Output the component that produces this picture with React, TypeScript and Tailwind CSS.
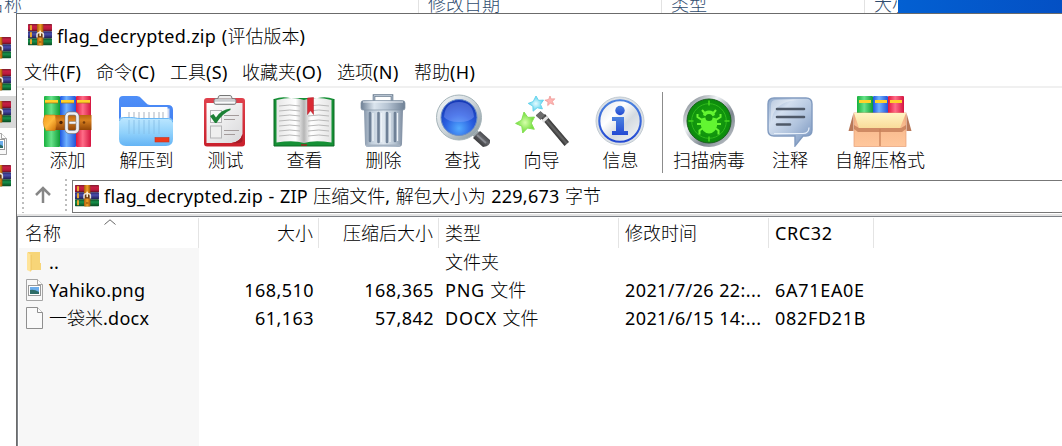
import React from "react";

function ArchiveIcon() {
  return (
    <svg width="24" height="22" viewBox="0 0 24 22" className="block shrink-0">
      <defs>
        <linearGradient id="bkRed" x1="0" y1="0" x2="0" y2="1"><stop offset="0" stopColor="#7a1c2c" /><stop offset=".3" stopColor="#c81f45" /><stop offset=".7" stopColor="#b81a3c" /><stop offset="1" stopColor="#5c1020" /></linearGradient>
        <linearGradient id="bkBlue" x1="0" y1="0" x2="0" y2="1"><stop offset="0" stopColor="#26265c" /><stop offset=".4" stopColor="#4a4eae" /><stop offset="1" stopColor="#1e1f50" /></linearGradient>
        <linearGradient id="bkGreen" x1="0" y1="0" x2="0" y2="1"><stop offset="0" stopColor="#0c4626" /><stop offset=".4" stopColor="#17934c" /><stop offset="1" stopColor="#0a4a22" /></linearGradient>
        <linearGradient id="strapV" x1="0" y1="0" x2="1" y2="0"><stop offset="0" stopColor="#a85b0c" /><stop offset=".5" stopColor="#f0a126" /><stop offset="1" stopColor="#a05208" /></linearGradient>
      </defs>
      <rect x="0" y="0" width="24" height="7.2" rx=".6" fill="url(#bkRed)" />
      <rect x="0" y="7.2" width="24" height="7" rx=".6" fill="url(#bkBlue)" />
      <rect x="0" y="14.2" width="24" height="7" rx=".6" fill="url(#bkGreen)" />
      <rect x="2" y="1.2" width="2" height="5" fill="#e6a52e" />
      <rect x="2" y="8.2" width="2" height="5" fill="#e6a52e" />
      <rect x="2" y="15.2" width="2" height="5" fill="#e6a52e" />
      <rect x="9" y="0" width="6.4" height="21.4" rx="1" fill="url(#strapV)" />
      <path d="M9 13.500V10.500q0-2 3.200-2t3.200 2v3" fill="#6a3a12" stroke="#e8e4dc" strokeWidth="1.500" />
      <rect x="11.400" y="6.600" width="1.600" height="5.600" rx=".6" fill="#fff0d0" />
      <path d="M11 18h2.4" stroke="#7d4208" strokeWidth="1" />
    </svg>
  );
}

function BooksIcon() {
  return (
    <svg width="50" height="52" viewBox="0 0 50 52">
      <defs>
        <linearGradient id="gG" x1="0" x2="1"><stop offset="0" stopColor="#16b03c" /><stop offset=".45" stopColor="#68e38a" /><stop offset="1" stopColor="#0f9c36" /></linearGradient>
        <linearGradient id="gB" x1="0" x2="1"><stop offset="0" stopColor="#1d55e0" /><stop offset=".4" stopColor="#6fb2ff" /><stop offset="1" stopColor="#2453d8" /></linearGradient>
        <linearGradient id="gR" x1="0" x2="1"><stop offset="0" stopColor="#e0143c" /><stop offset=".45" stopColor="#ff6d88" /><stop offset="1" stopColor="#d41440" /></linearGradient>
        <linearGradient id="belt" x1="0" y1="0" x2="0" y2="1"><stop offset="0" stopColor="#b8640e" /><stop offset=".35" stopColor="#d9811f" /><stop offset="1" stopColor="#934606" /></linearGradient>
        <linearGradient id="beltTip" x1="0" y1="0" x2="1" y2="1"><stop offset="0" stopColor="#f29a18" /><stop offset=".5" stopColor="#ffb93d" /><stop offset="1" stopColor="#d06f08" /></linearGradient>
      </defs>
      <rect x="2" y="1" width="16" height="51" rx="1" fill="url(#gG)" />
      <rect x="18" y="1" width="16" height="51" rx="1" fill="url(#gB)" />
      <rect x="34" y="1" width="15" height="51" rx="1" fill="url(#gR)" />
      <path d="M3 5h13v3H3zM19 5h13v3H19zM35 5h13v3H35z" fill="#ffd22b" />
      <path d="M3 8h13M19 8h13M35 8h13" stroke="#a86c12" strokeWidth=".7" />
      <rect x="12" y="20" width="37.500" height="15" fill="url(#belt)" />
      <path d="M3 20h10q3 7.500 0 15.500H4q-5-8-1-15.500z" fill="url(#beltTip)" stroke="#c87815" strokeWidth=".6" />
      <rect x="24.500" y="18.500" width="11" height="18.500" rx="3" fill="none" stroke="#77797f" strokeWidth="3.800" />
      <rect x="24.500" y="18.500" width="11" height="18.500" rx="3" fill="none" stroke="#edf0f4" strokeWidth="2.600" />
      <rect x="27" y="26.500" width="7" height="2.400" rx="1" fill="#f5f5f7" stroke="#888" strokeWidth=".5" />
      <circle cx="19" cy="27.500" r="1.700" fill="#4d2405" />
      <circle cx="42" cy="27.500" r="1.300" fill="#7a3d0a" />
    </svg>
  );
}

function FolderIcon() {
  return (
    <svg width="55" height="52" viewBox="0 0 55 52">
      <defs>
        <linearGradient id="fBack" x1="0" y1="0" x2="0" y2="1"><stop offset="0" stopColor="#4f8ff8" /><stop offset="1" stopColor="#3a78ee" /></linearGradient>
        <linearGradient id="fFront" x1="0" y1="0" x2="0" y2="1"><stop offset="0" stopColor="#bfe8ff" /><stop offset=".55" stopColor="#90d1fb" /><stop offset="1" stopColor="#64b4f5" /></linearGradient>
      </defs>
      <path d="M1 5q0-4 4-4h14q3 0 5 3l4 4q1.500 2 4 2h18q5 0 5 5v26H1z" fill="url(#fBack)" />
      <path d="M49 13.500h2.500V24H49z" fill="#cfd8f0" />
      <rect x="3" y="12" width="46.500" height="25" fill="#fff" />
      <path d="M11 17v8M16 17v8M21 17v8M26 17v8M31 17v8M36 17v8M41 17v8M45 17v8" stroke="#bfc5ce" strokeWidth="1.300" />
      <path d="M1 26q0-4 4-4h7q3 0 5 .5t5 .5h28q5 0 5 4v17q0 7-7 7H8q-7 0-7-7z" fill="url(#fFront)" />
      <path d="M11 25v14M16 25v14M21 25v14M26 25v14M31 25v14M36 25v14M41 25v14" stroke="#86bfe8" strokeWidth="1.200" opacity=".7" />
      <path d="M1.500 26q0-3.500 4-3.500h7q3 0 5 .5t5 .5h28q4 0 4.500 4" fill="none" stroke="#5fb0f4" strokeWidth=".9" />
      <rect x="37" y="42.500" width="14" height="4.500" fill="#ee3a1c" stroke="#c9341f" strokeWidth=".6" />
    </svg>
  );
}

function TestIcon() {
  return (
    <svg width="44" height="52" viewBox="0 0 44 52">
      <defs>
        <linearGradient id="clip" x1="0" y1="0" x2="0" y2="1"><stop offset="0" stopColor="#e0414c" /><stop offset="1" stopColor="#c9202c" /></linearGradient>
        <linearGradient id="pap" x1="0" y1="0" x2="1" y2="1"><stop offset="0" stopColor="#fff" /><stop offset="1" stopColor="#d8d8da" /></linearGradient>
      </defs>
      <rect x="1" y="3" width="41" height="48.500" rx="3" fill="url(#clip)" />
      <path d="M3.500 8h36v31q-2 8-11 9h-25z" fill="url(#pap)" />
      <path d="M39.500 39q-2 8-11 9 10 1 11-2z" fill="#a31c26" />
      <rect x="11" y="3.500" width="22" height="6" rx="2" fill="#c9cbce" stroke="#777" strokeWidth=".8" />
      <path d="M15 3.500q0-3 2-3h10q2 0 2 3" fill="#eee" stroke="#777" strokeWidth="1" />
      <path d="M12 7.500h20" stroke="#fafafa" strokeWidth="1.500" />
      <rect x="7.500" y="15.500" width="11" height="12" fill="#f8f8f8" stroke="#b4b4b6" strokeWidth="1" />
      <rect x="7.500" y="31" width="11" height="12" fill="#efefef" stroke="#b4b4b6" strokeWidth="1" />
      <path d="M7 21l3.500-2 2.500 3.500Q18 14.500 27.500 13.500V15Q19.500 18.500 13.500 28H12z" fill="#1d8136" />
      <path d="M21 20.500h15M21 24.500h11M21 35.500h15M21 39.500h11" stroke="#a39b9b" strokeWidth="1.100" />
    </svg>
  );
}

function BookIcon() {
  return (
    <svg width="62" height="52" viewBox="0 0 62 52">
      <defs>
        <linearGradient id="pgL" x1="0" x2="1"><stop offset="0" stopColor="#e6e6e6" /><stop offset=".7" stopColor="#fff" /><stop offset="1" stopColor="#b5b5b5" /></linearGradient>
        <linearGradient id="pgR" x1="0" x2="1"><stop offset="0" stopColor="#b5b5b5" /><stop offset=".25" stopColor="#fff" /><stop offset="1" stopColor="#e4e4e4" /></linearGradient>
      </defs>
      <path d="M1 4q8-3 16-1h28q8-2 16 1v47H1z" fill="#159035" />
      <path d="M1 4v47h60V4" fill="none" stroke="#0c6b24" strokeWidth="1" />
      <path d="M3.500 5q16-4 27.500 0v43q-10-3-27.500-.5z" fill="url(#pgL)" />
      <path d="M58.500 5Q43 1 31 5v43q10-3 27.500-.5z" fill="url(#pgR)" />
      <path d="M6 11q11-2 21 0M6 16q11-2 21 0M6 21q11-2 21 0M6 26q11-2 21 0M6 31q11-2 21 0M6 36q11-2 21 0M6 41q11-2 21 0M35 11q11-2 21 0M35 16q11-2 21 0M35 21q11-2 21 0M35 26q11-2 21 0M35 31q11-2 21 0M35 36q11-2 21 0M35 41q11-2 21 0" fill="none" stroke="#b9b9b9" strokeWidth="1" />
      <path d="M34.500 3l6-.5V19.500l-3-4-3 4z" fill="#d92a34" stroke="#b01c28" strokeWidth=".5" />
      <path d="M28 50h6" stroke="#a02020" strokeWidth="1.500" />
    </svg>
  );
}

function TrashIcon() {
  return (
    <svg width="46" height="54" viewBox="0 0 46 54">
      <defs>
        <linearGradient id="can" x1="0" x2="1"><stop offset="0" stopColor="#8797aa" /><stop offset=".2" stopColor="#c3d0dd" /><stop offset=".5" stopColor="#e0e8f0" /><stop offset=".8" stopColor="#b5c3d1" /><stop offset="1" stopColor="#7d8ca0" /></linearGradient>
        <linearGradient id="lid" x1="0" x2="1"><stop offset="0" stopColor="#6d7f94" /><stop offset=".3" stopColor="#dbe5ee" /><stop offset=".6" stopColor="#b6c4d3" /><stop offset="1" stopColor="#6e8095" /></linearGradient>
      </defs>
      <path d="M14 7V1.500h18V7" fill="none" stroke="#66788c" strokeWidth="2.600" />
      <path d="M14 6V1.500h18V6" fill="none" stroke="#b6c3d1" strokeWidth="1" />
      <path d="M4 15h39l-1 35q0 3-4 3H9q-4 0-4-3z" fill="url(#can)" />
      <path d="M10 19v28M18.500 19v29M27 19v29M35 19v28" stroke="#6f8197" strokeWidth="2.600" strokeLinecap="round" />
      <path d="M13 19v28M21.500 19v29M30 19v29M37.500 19v28" stroke="#edf3f8" strokeWidth="1.300" />
      <path d="M6 51.500h34" stroke="#a4b2c1" strokeWidth="2" />
      <path d="M1 9q0-2.500 3-2.500h38q3 0 3 2.500v5q0 2-2 2H3q-2 0-2-2z" fill="url(#lid)" stroke="#8393a5" strokeWidth=".7" />
      <path d="M3 8h40" stroke="#eef3f8" strokeWidth="1" />
    </svg>
  );
}

function FindIcon() {
  return (
    <svg width="56" height="56" viewBox="0 0 56 56">
      <defs>
        <linearGradient id="rim" x1="0" y1="0" x2="1" y2="1"><stop offset="0" stopColor="#f9fbfc" /><stop offset=".5" stopColor="#cbd3d8" /><stop offset="1" stopColor="#7e8f97" /></linearGradient>
        <radialGradient id="lens" cx=".5" cy=".8" r=".7"><stop offset="0" stopColor="#53aaff" /><stop offset=".55" stopColor="#2a5fe0" /><stop offset="1" stopColor="#173bb8" /></radialGradient>
        <linearGradient id="handle" x1="0" y1="1" x2="1" y2="0"><stop offset="0" stopColor="#111" /><stop offset=".55" stopColor="#65666b" /><stop offset="1" stopColor="#17181c" /></linearGradient>
      </defs>
      <path d="M37 37l6 6" stroke="#9aa3a8" strokeWidth="7" />
      <path d="M38 45l7-7L55 47q1 6-7 7z" fill="url(#handle)" />
      <path d="M42 42L51 50" stroke="#8a8c93" strokeWidth="1.800" />
      <circle cx="24" cy="24.500" r="22.500" fill="url(#rim)" stroke="#a5b4b9" strokeWidth="1" />
      <circle cx="24" cy="24.500" r="18" fill="url(#lens)" stroke="#698ec8" strokeWidth="1" />
      <path d="M9 24Q10 9 24 9t15 15q-4 5-15 5T9 24z" fill="#9dafff" opacity=".35" />
    </svg>
  );
}

function WizardIcon() {
  return (
    <svg width="54" height="54" viewBox="0 0 54 54">
      <defs>
        <linearGradient id="wand" x1="0" y1="1" x2="1" y2="0"><stop offset=".38" stopColor="#0d0d0d" /><stop offset=".5" stopColor="#666" /><stop offset=".6" stopColor="#1a1a1a" /></linearGradient>
        <radialGradient id="sG"><stop offset="0" stopColor="#d6ffab" /><stop offset="1" stopColor="#6bdc33" /></radialGradient>
        <radialGradient id="sB"><stop offset="0" stopColor="#e4fbff" /><stop offset="1" stopColor="#5bd2ee" /></radialGradient>
      </defs>
      <path d="M9 18l3.800 5.400 6.700-.3-3.200 6 3 6.200-6.800-1.300-4.800 5-.9-6.800-6.200-2.800 6-3.200z" fill="url(#sG)" stroke="#86e056" strokeWidth="1" />
      <path d="M21 2l2.500 4.400 5-.3-3 4.300 1.900 4.500-5.200-1.200-4.100 3.500-.2-5.100-4.700-2.700 5-1.800z" fill="url(#sB)" stroke="#67d4ed" strokeWidth="1" />
      <path d="M35 2l1.200 3 3.600-.2-2.400 2.600 1.400 3.300-3.500-1.500-2.600 2.400.3-3.700-3.100-1.700 3.700-.7z" fill="#ffb5b3" stroke="#ef9a98" strokeWidth=".8" />
      <path d="M26 24l4-4 24 28-4.500 4z" fill="url(#wand)" />
      <path d="M21 21.500l4.500-4 4.500 4-4.500 4z" fill="#6c6c6c" stroke="#444" strokeWidth=".6" />
      <path d="M26.500 26.500l5-4.500 2 2-5 4.700z" fill="#e7e7e7" />
    </svg>
  );
}

function InfoIcon() {
  return (
    <svg width="50" height="50" viewBox="0 0 50 50">
      <defs>
        <linearGradient id="inf" x1="0" y1="0" x2="1" y2="1"><stop offset="0" stopColor="#e0e4e8" /><stop offset=".35" stopColor="#fff" /><stop offset=".6" stopColor="#d4dae0" /><stop offset="1" stopColor="#f6f8f9" /></linearGradient>
        <linearGradient id="infB" x1="0" y1="0" x2="0" y2="1"><stop offset="0" stopColor="#4c83df" /><stop offset="1" stopColor="#2349d3" /></linearGradient>
      </defs>
      <circle cx="25" cy="25" r="24" fill="#dce1e6" stroke="#c2cbd2" />
      <circle cx="25" cy="25" r="20.700" fill="url(#inf)" stroke="url(#infB)" strokeWidth="2.100" />
      <circle cx="25" cy="14.500" r="4.700" fill="url(#infB)" />
      <path d="M17 21h12v14h4v4H17v-4h4V25h-4z" fill="url(#infB)" />
    </svg>
  );
}

function VirusIcon() {
  return (
    <svg width="54" height="54" viewBox="0 0 54 54">
      <defs>
        <linearGradient id="vr" x1="0" y1="0" x2="1" y2="1"><stop offset="0" stopColor="#59636c" /><stop offset=".35" stopColor="#f0f3f6" /><stop offset=".65" stopColor="#7e8790" /><stop offset="1" stopColor="#d1d6da" /></linearGradient>
        <radialGradient id="vg" cx=".5" cy=".5" r=".55"><stop offset="0" stopColor="#1cab0f" /><stop offset="1" stopColor="#0a860c" /></radialGradient>
      </defs>
      <circle cx="27" cy="27" r="26" fill="url(#vr)" />
      <circle cx="27" cy="27" r="22" fill="url(#vg)" stroke="#16601a" />
      <circle cx="27" cy="27" r="17.300" fill="none" stroke="#2fb91c" strokeWidth="1" />
      <path d="M27 6.500v5M27 42.500v5M6.500 27h5M42.500 27h5" stroke="#45d51f" strokeWidth="1.600" />
      <path d="M22.500 19l-2.500-3M31.500 19l2.500-3M20 26l-4.500-3v-3M34 26l4.500-3v-3M20 30h-5M34 30h5M21 34l-3.500 2.500v4M33 34l3.500 2.500v4" fill="none" stroke="#6af534" strokeWidth="2" />
      <path d="M21 20.500q1.500-4 6-4t6 4q-1 2-6 2t-6-2zM19.500 24.500q7.500-3 15 0 2 8-2 12.500-5.500 5-11 0-4-4.500-2-12.500z" fill="#62f531" />
      <circle cx="27" cy="23.500" r="3.600" fill="#15930d" />
    </svg>
  );
}

function CommentIcon() {
  return (
    <svg width="48" height="52" viewBox="0 0 48 52">
      <defs>
        <linearGradient id="cm" x1="0" y1="0" x2="1" y2="1"><stop offset="0" stopColor="#8da7ca" /><stop offset=".3" stopColor="#d3dfef" /><stop offset=".6" stopColor="#b0c3dd" /><stop offset="1" stopColor="#6f8dba" /></linearGradient>
      </defs>
      <path d="M8 3h32q6 0 6 6v26q0 6-6 6h-3l-8 10V41H8q-6 0-6-6V9q0-6 6-6z" fill="url(#cm)" stroke="#819bc0" strokeWidth="1.400" />
      <path d="M5 29Q6 7 31 5H10Q5 5 5 10z" fill="#fff" opacity=".35" />
      <path d="M8 38.500h29q6 0 6-6" fill="none" stroke="#e8f0fa" strokeWidth="1.200" />
      <path d="M11 14h27M11 22h27M11 29.500h13" stroke="#4f5968" strokeWidth="2.600" strokeLinecap="round" />
    </svg>
  );
}

function SfxIcon() {
  return (
    <svg width="64" height="52" viewBox="0 0 64 52">
      <defs>
        <linearGradient id="bx" x1="0" y1="0" x2="0" y2="1"><stop offset="0" stopColor="#f3b184" /><stop offset="1" stopColor="#ffc79c" /></linearGradient>
        <linearGradient id="flap" x1="0" y1="0" x2="0" y2="1"><stop offset="0" stopColor="#fff4c4" /><stop offset="1" stopColor="#f9dc9a" /></linearGradient>
      </defs>
      <rect x="9" y="1" width="16" height="20" rx="1" fill="url(#gG)" />
      <rect x="25" y="1" width="15" height="20" rx="1" fill="url(#gB)" />
      <rect x="40" y="1" width="16" height="20" rx="1" fill="url(#gR)" />
      <path d="M11 5h12v3H11zM27 5h12v3H27zM42 5h12v3H42z" fill="#ffd22b" />
      <path d="M5.500 18L.5 36h5zM58.500 18l5 18h-5z" fill="#b87859" />
      <rect x="6" y="18" width="52" height="33.500" fill="url(#bx)" stroke="#e69d75" strokeWidth=".7" />
      <path d="M6 30l5 3h42l5-3v4l-4 3H10l-4-3z" fill="#b96e4b" opacity=".65" />
      <path d="M6 18h52l-6 15H11z" fill="url(#flap)" />
      <path d="M32 34v17" stroke="#c88058" strokeWidth="1.300" />
    </svg>
  );
}

function ImageFileIcon() {
  return (
    <svg width="17" height="22" viewBox="0 0 17 22" className="block shrink-0">
      <path d="M.5.5h11l5 5v16H.5z" fill="#f8f8f8" stroke="#a5a5a5" />
      <path d="M11.500.5v5h5" fill="#fff" stroke="#a5a5a5" />
      <rect x="2.500" y="6.500" width="12" height="10" fill="#fff" stroke="#999" />
      <rect x="4" y="8" width="9" height="7" fill="#6cadeb" />
      <path d="M4 11q4-1 9 2v2H4z" fill="#2d6c67" />
    </svg>
  );
}

function Dots({ className }: { className: string }) {
  return <div className={"w-[2px] shrink-0 bg-[repeating-linear-gradient(to_bottom,#bdbdbd_0px,#bdbdbd_2px,transparent_2px,transparent_5px)] " + className} />;
}

/** Sets runs of Chinese in the light face and leaves Latin text at normal weight. */
function Mixed({ text, className = "" }: { text: string; className?: string }) {
  return (
    <span className={"shrink-0 whitespace-pre " + className}>
      {text.split(/([\u4e00-\u9fff]+)/).map((run, i) =>
        i % 2 ? <span key={i} className="font-light tracking-normal">{run}</span> : run
      )}
    </span>
  );
}

const tools = [
  { label: "添加", icon: <BooksIcon />, w: "w-[79px]", shift: "pr-[2px]" },
  { label: "解压到", icon: <FolderIcon />, w: "w-[79px]", shift: "pr-[2px]" },
  { label: "测试", icon: <TestIcon />, w: "w-[79px]", shift: "pr-[1px]" },
  { label: "查看", icon: <BookIcon />, w: "w-[79px]", shift: "pr-[1px]" },
  { label: "删除", icon: <TrashIcon />, w: "w-[79px]", shift: "pr-[2px]" },
  { label: "查找", icon: <FindIcon />, w: "w-[79px]", shift: "" },
  { label: "向导", icon: <WizardIcon />, w: "w-[79px]", shift: "" },
  { label: "信息", icon: <InfoIcon />, w: "w-[79px]", shift: "pr-[2px]" },
];
const extraTools = [
  { label: "扫描病毒", icon: <VirusIcon />, w: "w-[92px]", shift: "" },
  { label: "注释", icon: <CommentIcon />, w: "w-[70px]", shift: "" },
  { label: "自解压格式", icon: <SfxIcon />, w: "w-[110px]", shift: "" },
];

function Tool({ label, icon, w, shift }: { label: string; icon: React.ReactNode; w: string; shift: string }) {
  return (
    <button className={"flex h-[89px] shrink-0 flex-col items-center " + w}>
      <span className={"flex h-[66px] items-center justify-center " + shift}>{icon}</span>
      <span className="-mt-[6px] leading-[24px] font-light">{label}</span>
    </button>
  );
}

const menus = [
  { t: "文件(F)", w: "w-[72px]" },
  { t: "命令(C)", w: "w-[74px]" },
  { t: "工具(S)", w: "w-[72px]" },
  { t: "收藏夹(O)", w: "w-[95px]" },
  { t: "选项(N)", w: "w-[77px]" },
  { t: "帮助(H)", w: "w-[72px]" },
];

const grid = "grid grid-cols-[181px_120px_120px_180px_150px_105px]";
const rows = [
  { kind: "dir", name: "..", size: "", packed: "", type: "文件夹", date: "", crc: "" },
  { kind: "img", name: "Yahiko.png", size: "168,510", packed: "168,365", type: "PNG 文件", date: "2021/7/26 22:...", crc: "6A71EA0E" },
  { kind: "doc", name: "一袋米.docx", size: "61,163", packed: "57,842", type: "DOCX 文件", date: "2021/6/15 14:...", crc: "082FD21B" },
];

function RowIcon({ kind }: { kind: string }) {
  if (kind === "img") return <ImageFileIcon />;
  if (kind === "doc")
    return (
      <svg width="17" height="22" viewBox="0 0 17 22" className="block shrink-0">
        <path d="M.5.5h11l5 5v16H.5z" fill="#fafafa" stroke="#8f8f8f" />
        <path d="M11.500.5v5h5" fill="#fff" stroke="#8f8f8f" />
      </svg>
    );
  return (
    <svg width="17" height="22" viewBox="0 0 17 22" className="block shrink-0">
      <path d="M2 1h12v11h1v7H2z" fill="#f7d578" />
      <path d="M1 1l4 3v17l-4-2z" fill="#ffe499" />
      <path d="M5 4v16" stroke="#e8bd55" strokeWidth=".7" />
    </svg>
  );
}

export default function App() {
  return (
    <div className="flex h-[446px] w-[1062px] flex-col overflow-hidden bg-white font-['Noto_Sans','Noto_Sans_CJK_SC',sans-serif] text-[18px] font-normal whitespace-nowrap text-black">
      <div className="flex h-[13px] shrink-0 overflow-hidden leading-[24px] font-light text-[#2f4c6e]">
        <div className="flex h-[13px] w-[418px] shrink-0 items-end"><span className="-mb-[3px] -ml-[14px]">名称</span></div>
        <div className="flex h-[13px] w-[243px] shrink-0 items-end border-l border-[#e2e2e2] pl-[9px]"><span className="-mb-[3px]">修改日期</span></div>
        <div className="flex h-[13px] w-[203px] shrink-0 items-end border-l border-[#e2e2e2] pl-[9px]"><span className="-mb-[3px]">类型</span></div>
        <div className="flex h-[13px] w-[34px] shrink-0 items-end overflow-hidden border-l border-[#e2e2e2] pl-[9px]"><span className="-mb-[3px]">大小</span></div>
        <div className="h-[13px] flex-1 bg-linear-to-r from-[#0360d2] to-[#0450c4]" />
      </div>
      <div className="flex min-h-0 flex-1">
        <div className="flex w-[16px] shrink-0 flex-col overflow-hidden pt-[19px]">
          <div className="flex h-[32px] items-center"><div className="-ml-[13px]"><ArchiveIcon /></div></div>
          <div className="flex h-[32px] items-center"><div className="-ml-[13px]"><ArchiveIcon /></div></div>
          <div className="flex h-[32px] items-center bg-[#d9d9d9]"><div className="-ml-[13px]"><ArchiveIcon /></div></div>
          <div className="flex h-[32px] items-center"><div className="-ml-[10px]"><ImageFileIcon /></div></div>
          <div className="flex h-[32px] items-center"><div className="-ml-[13px]"><ArchiveIcon /></div></div>
        </div>
        <div className="flex min-w-0 flex-1 flex-col border-t border-l border-[#6b6b6b]">
          <div className="flex h-[44px] shrink-0 items-center pl-[11px]">
            <div className="mb-[2px]"><ArchiveIcon /></div>
            <Mixed className="ml-[5px] tracking-[0.27px] [word-spacing:0.7px]" text="flag_decrypted.zip (评估版本)" />
          </div>
          <div className="flex h-[28px] shrink-0 items-center pl-[7px]">
            {menus.map((m) => <Mixed key={m.t} className={"tracking-[0.4px] " + m.w} text={m.t} />)}
          </div>
          <div className="h-[2px] shrink-0 bg-[#f0f0f0]" />
          <div className="flex h-[89px] shrink-0 pl-[5px]">
            <Dots className="h-[89px]" />
            <div className="flex pl-[4px]">{tools.map((t) => <Tool key={t.label} {...t} />)}</div>
            <div className="mt-[4px] ml-[2px] h-[81px] w-px bg-[#8c8c8c]" />
            <div className="flex">{extraTools.map((t) => <Tool key={t.label} {...t} />)}</div>
          </div>
          <div className="flex h-[37px] shrink-0 pl-[5px]">
            <Dots className="h-[36px]" />
            <div className="flex w-[41px] items-center justify-center pr-[4px] pb-[2px]">
              <svg width="18" height="18" viewBox="0 0 18 18"><path d="M9 17V2M2 9l7-7 7 7" fill="none" stroke="#868686" strokeWidth="2.500" /></svg>
            </div>
            <Dots className="mt-[2px] h-[34px]" />
            <div className="mt-[3px] ml-[5px] flex h-[33px] flex-1 items-center border-y border-l border-[#777] pb-px pl-[2px]">
              <ArchiveIcon />
              <Mixed className="ml-[5px] tracking-[0.27px] [word-spacing:0.4px]" text="flag_decrypted.zip - ZIP 压缩文件, 解包大小为 229,673 字节" />
            </div>
          </div>
          <div className="h-[2px] shrink-0 bg-[#e3e3e3]" />
          <div className="flex min-h-0 flex-1 flex-col border-t border-l border-[#7e8288]">
            <div className={"h-[31px] shrink-0 pt-px " + grid}>
              <div className="relative flex items-center border-r border-[#e4e4e4] pl-[7px] font-light">
                名称
                <svg width="12" height="6" viewBox="0 0 12 6" className="absolute top-px left-[86px]"><path d="M.5 5.500L6 .8l5.500 4.700" fill="none" stroke="#666" /></svg>
              </div>
              <div className="flex items-center justify-end border-r border-[#e4e4e4] pr-[5px] font-light">大小</div>
              <div className="flex items-center justify-end border-r border-[#e4e4e4] pr-[5px] font-light">压缩后大小</div>
              <div className="flex items-center border-r border-[#e4e4e4] pl-[6px] font-light">类型</div>
              <div className="flex items-center border-r border-[#e4e4e4] pl-[6px] font-light">修改时间</div>
              <div className="flex items-center border-r border-[#e4e4e4] pl-[6px] tracking-[0.6px]">CRC32</div>
            </div>
            {rows.map((r) => (
              <div key={r.name} className={"h-[28px] shrink-0 " + grid}>
                <div className="ml-px flex items-center bg-[#f7f7f7] pl-[7px]">
                  <RowIcon kind={r.kind} />
                  <Mixed className="ml-[6px] tracking-[0.25px]" text={r.name} />
                </div>
                <div className="flex items-center justify-end pr-[5px] tracking-[0.45px]">{r.size}</div>
                <div className="flex items-center justify-end pr-[5px] tracking-[0.45px]">{r.packed}</div>
                <div className="flex items-center pl-[6px]"><Mixed className="tracking-[0.75px]" text={r.type} /></div>
                <div className="flex items-center pl-[6px] tracking-[0.4px]">{r.date}</div>
                <div className="flex items-center pl-[6px] tracking-[0.7px]">{r.crc}</div>
              </div>
            ))}
            <div className="ml-px w-[180px] flex-1 bg-[#f7f7f7]" />
          </div>
        </div>
      </div>
    </div>
  );
}
